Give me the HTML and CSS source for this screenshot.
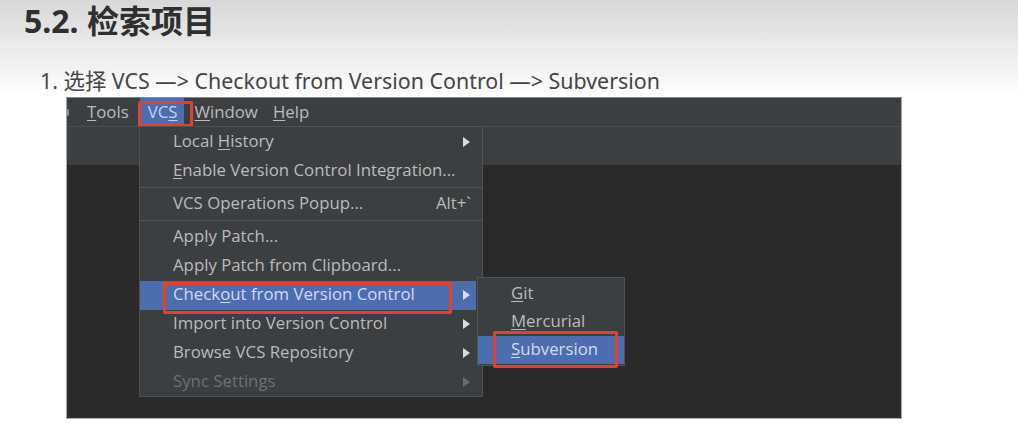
FILE: index.html
```html
<!DOCTYPE html>
<html lang="zh">
<head>
<meta charset="utf-8">
<link rel="stylesheet" href="styles.css">
</head>
<body>
<h2 class="title">5.2. 检索项目</h2>
<ol class="steps">
  <li>选择 VCS —&gt; Checkout from Version Control —&gt; Subversion</li>
</ol>
<div class="shot">
  <div class="menubar">
    <span class="mb-cut"></span>
    <span class="mb-item mb-tools"><u>T</u>ools</span>
    <span class="mb-item mb-active">VC<u>S</u></span>
    <span class="mb-item mb-window"><u>W</u>indow</span>
    <span class="mb-item mb-help"><u>H</u>elp</span>
    <span class="mark mark-vcs"></span>
  </div>
  <div class="toolbar"></div>
  <div class="editor"></div>

  <div class="menu">
    <div class="row"><span class="label">Local <u>H</u>istory</span><span class="arrow"></span></div>
    <div class="row"><span class="label"><u>E</u>nable Version Control Integration...</span></div>
    <div class="sep"></div>
    <div class="row"><span class="label">VCS Operations Popup...</span><span class="key">Alt+`</span></div>
    <div class="sep"></div>
    <div class="row"><span class="label">Apply Patch...</span></div>
    <div class="row"><span class="label">Apply Patch from Clipboard...</span></div>
    <div class="row row-sel"><span class="label">Check<u>o</u>ut from Version Control</span><span class="arrow"></span><span class="mark mark-checkout"></span></div>
    <div class="row"><span class="label">Import into Version Control</span><span class="arrow"></span></div>
    <div class="row"><span class="label">Browse VCS Repository</span><span class="arrow"></span></div>
    <div class="row row-off"><span class="label">Sync Settings</span><span class="arrow"></span></div>
  </div>

  <div class="submenu">
    <div class="srow"><u>G</u>it</div>
    <div class="srow"><u>M</u>ercurial</div>
    <div class="srow srow-sel"><u>S</u>ubversion</div>
    <span class="mark mark-svn"></span>
  </div>
</div>
</body>
</html>
```
FILE: styles.css
```css
html, body {
  margin: 0;
  padding: 0;
}
body {
  width: 1018px;
  height: 432px;
  overflow: hidden;
  background: linear-gradient(to bottom, #d8d8d8 0px, #f3f3f3 70px, #ffffff 95px) no-repeat;
  font-family: "Noto Sans", "Noto Sans CJK SC", sans-serif;
  color: #333;
}
.title {
  margin: 0;
  padding: 1px 0 0 24px;
  height: 40px;
  font-size: 32px;
  line-height: 40px;
  font-weight: 700;
  color: #2f2f2f;
}
.steps {
  margin: 0;
  padding: 26px 0 0 40px;
  list-style: none;
  font-size: 21.4px;
  line-height: 28px;
  color: #454545;
  height: 30px;
}
.steps li::before {
  content: "1. ";
}
.shot {
  position: relative;
  margin-left: 66px;
  width: 834px;
  height: 320px;
  border: 1px solid #a9a9a9;
  border-top-color: #8a8a8a;
  background: #2b2b2b;
  overflow: hidden;
  display: flex;
  flex-direction: column;
  font-family: "Open Sans", "Noto Sans", sans-serif;
}
.menubar {
  position: relative;
  height: 28px;
  background: #3c3f41;
  border-bottom: 1px solid #4a4d4f;
  display: flex;
  align-items: center;
  font-size: 16.8px;
  color: #bbbbbb;
}
.mb-cut {
  width: 2px;
  height: 7px;
  margin-right: 18px;
  background: #8a8c8d;
  border-radius: 1px;
}
.mb-item {
  line-height: 28px;
  height: 28px;
  white-space: nowrap;
}
.mb-active {
  background: #4a6eb0;
  margin-left: 11px;
  padding: 0 7px 0 8px;
  color: #c8d3e8;
}
.mb-window {
  margin-left: 10px;
}
.mb-help {
  margin-left: 15px;
}
.toolbar {
  height: 38px;
  background: #3c3f41;
}
.editor {
  flex: 1;
  background: #2a2a2a;
}
u {
  text-decoration: underline;
  text-underline-offset: 2px;
  text-decoration-thickness: 1px;
}
.menu {
  position: absolute;
  left: 72px;
  top: 28px;
  width: 342px;
  height: 268px;
  padding-top: 1px;
  background: #3c3f41;
  border: 1px solid #4e5254;
  font-size: 16.8px;
  color: #bbbbbb;
}
.row {
  position: relative;
  box-sizing: border-box;
  height: 29px;
  display: flex;
  align-items: center;
  padding-left: 33px;
  padding-right: 11px;
  padding-bottom: 4px;
}
.label {
  flex: 1;
  white-space: nowrap;
}
.key {
  white-space: nowrap;
}
.arrow {
  width: 0;
  height: 0;
  border-top: 5.5px solid transparent;
  border-bottom: 5.5px solid transparent;
  border-left: 7px solid #dcdcdc;
  margin-right: 1px;
  margin-top: 3px;
}
.sep {
  height: 4px;
  position: relative;
}
.sep::after {
  content: "";
  position: absolute;
  left: 0;
  right: 0;
  top: 1px;
  height: 1px;
  background: #515658;
}
.row-sel {
  background: #4a6eb0;
  color: #d4dcec;
  margin-right: 6px;
  padding-right: 5px;
}
.row-off {
  color: #6f6f6f;
}
.row-off .arrow {
  border-left-color: #6a6a6a;
}
.submenu {
  position: absolute;
  left: 410px;
  top: 179px;
  width: 146px;
  padding: 2px 0 1px 0;
  background: #3c3f41;
  border: 1px solid #4e5254;
  font-size: 16.8px;
  color: #bbbbbb;
}
.srow {
  height: 28px;
  line-height: 26px;
  padding-left: 33px;
}
.srow-sel {
  background: #4a6eb0;
  color: #d4dcec;
}
.mark {
  position: absolute;
  border: 3px solid #e63f2c;
  border-radius: 2px;
  box-sizing: border-box;
  pointer-events: none;
}
.mark-vcs {
  left: 71px;
  top: 3px;
  width: 55px;
  height: 26px;
}
.mark-checkout {
  left: 23px;
  top: 1px;
  width: 289px;
  height: 32px;
}
.mark-svn {
  left: 15px;
  top: 53px;
  width: 125px;
  height: 37px;
}
```
